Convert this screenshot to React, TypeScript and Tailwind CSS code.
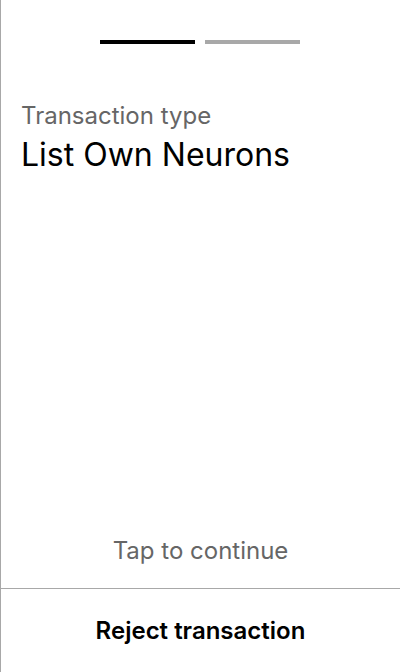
export default function App() {
  return (
    <div
      className="flex h-[672px] w-[400px] flex-col border-l border-[#a8a8a8] bg-white"
      style={{ fontFamily: "Inter, 'Noto Sans', sans-serif" }}
    >
      <div className="flex justify-center gap-[10px] pr-[1px] pt-[40px]">
        <div className="h-[4px] w-[95px] bg-black" />
        <div className="h-[4px] w-[95px] bg-[#a8a8a8]" />
      </div>

      <div className="px-[20px] pt-[56px]">
        <div className="text-[24px] leading-[32px] text-[#666666]">Transaction type</div>
        <div className="mt-[3px] text-[32px] leading-[40px] text-black">List Own Neurons</div>
      </div>

      <div className="flex-1" />

      <div className="pb-[21px] text-center text-[24px] leading-[32px] text-[#666666]">
        Tap to continue
      </div>

      <button className="flex h-[84px] items-center justify-center border-t border-[#a8a8a8] text-[24px] font-semibold text-black">
        Reject transaction
      </button>
    </div>
  );
}
